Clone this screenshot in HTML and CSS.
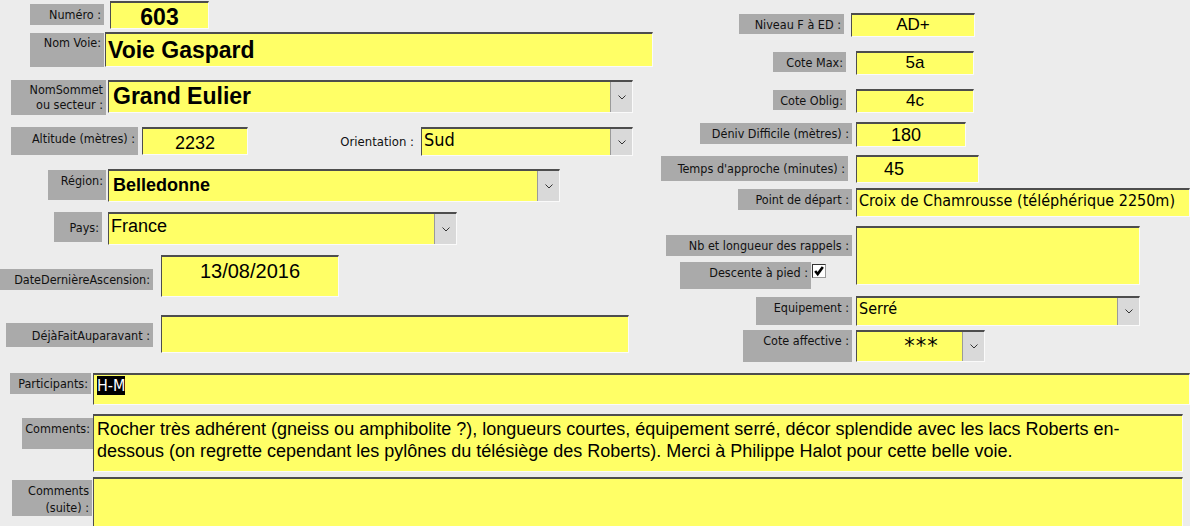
FILE: index.html
```html
<!DOCTYPE html>
<html lang="fr">
<head>
    <meta charset="UTF-8">
    <title>Voie Gaspard</title>
    <link rel="stylesheet" href="styles.css">
</head>
<body>
    <div class="form">
        <div class="top">
            <!-- colonne gauche -->
            <div class="col-left">
                <div class="row r-num">
                    <div class="lbl">Numéro :</div>
                    <div class="fld big center">603</div>
                </div>
                <div class="row r-voie">
                    <div class="lbl">Nom Voie:</div>
                    <div class="fld big">Voie Gaspard</div>
                </div>
                <div class="row r-sommet">
                    <div class="lbl">NomSommet<br>ou secteur :</div>
                    <div class="fld big combo">Grand Eulier<span class="drop"><svg viewBox="0 0 8 5"><polyline points="0.5,0.5 4,4 7.5,0.5"/></svg></span></div>
                </div>
                <div class="row r-alt">
                    <div class="lbl">Altitude (mètres) :</div>
                    <div class="fld mid center">2232</div>
                    <div class="plain">Orientation :</div>
                    <div class="fld tah combo">Sud<span class="drop"><svg viewBox="0 0 8 5"><polyline points="0.5,0.5 4,4 7.5,0.5"/></svg></span></div>
                </div>
                <div class="row r-region">
                    <div class="lbl">Région:</div>
                    <div class="fld mid bold combo">Belledonne<span class="drop"><svg viewBox="0 0 8 5"><polyline points="0.5,0.5 4,4 7.5,0.5"/></svg></span></div>
                </div>
                <div class="row r-pays">
                    <div class="lbl">Pays:</div>
                    <div class="fld mid combo">France<span class="drop"><svg viewBox="0 0 8 5"><polyline points="0.5,0.5 4,4 7.5,0.5"/></svg></span></div>
                </div>
                <div class="row r-date">
                    <div class="lbl">DateDernièreAscension:</div>
                    <div class="fld date center">13/08/2016</div>
                </div>
                <div class="row r-deja">
                    <div class="lbl">DéjàFaitAuparavant :</div>
                    <div class="fld"></div>
                </div>
            </div>

            <!-- colonne droite -->
            <div class="col-right">
                <div class="row n-niveau">
                    <div class="lbl">Niveau F à ED :</div>
                    <div class="fld small center">AD+</div>
                </div>
                <div class="row n-max">
                    <div class="lbl">Cote Max:</div>
                    <div class="fld small center">5a</div>
                </div>
                <div class="row n-oblig">
                    <div class="lbl">Cote Oblig:</div>
                    <div class="fld small center">4c</div>
                </div>
                <div class="row n-deniv">
                    <div class="lbl">Déniv Difficile (mètres) :</div>
                    <div class="fld num">180</div>
                </div>
                <div class="row n-temps">
                    <div class="lbl">Temps d'approche (minutes) :</div>
                    <div class="fld num">45</div>
                </div>
                <div class="row n-point">
                    <div class="lbl">Point de départ :</div>
                    <div class="fld tah16">Croix de Chamrousse (téléphérique 2250m)</div>
                </div>
                <div class="row n-rappels">
                    <div class="stack">
                        <div class="lbl l-rappels">Nb et longueur des rappels :</div>
                        <div class="check-line">
                            <div class="lbl l-pied">Descente à pied :</div>
                            <span class="check"><svg viewBox="0 0 11 11"><path d="M2 5.5 L4.3 8.3 L9 1.8"/></svg></span>
                        </div>
                    </div>
                    <div class="fld"></div>
                </div>
                <div class="row n-equip">
                    <div class="lbl">Equipement :</div>
                    <div class="fld tah16 combo">Serré<span class="drop"><svg viewBox="0 0 8 5"><polyline points="0.5,0.5 4,4 7.5,0.5"/></svg></span></div>
                </div>
                <div class="row n-affect">
                    <div class="lbl">Cote affective :</div>
                    <div class="fld combo stars">***<span class="drop"><svg viewBox="0 0 8 5"><polyline points="0.5,0.5 4,4 7.5,0.5"/></svg></span></div>
                </div>
            </div>
        </div>

        <!-- zone du bas -->
        <div class="bottom">
            <div class="row b-part">
                <div class="lbl">Participants:</div>
                <div class="fld"><span class="sel">H-M</span></div>
            </div>
            <div class="row b-comm">
                <div class="lbl">Comments:</div>
                <div class="fld text">Rocher très adhérent (gneiss ou amphibolite ?), longueurs courtes, équipement serré, décor splendide avec les lacs Roberts en-<br>dessous (on regrette cependant les pylônes du télésiège des Roberts). Merci à Philippe Halot pour cette belle voie.</div>
            </div>
            <div class="row b-suite">
                <div class="lbl">Comments<br>(suite) :</div>
                <div class="fld"></div>
            </div>
        </div>
    </div>
</body>
</html>
```

FILE: styles.css
```css
body {
    margin: 0;
    background: #ececec;
    font-family: "DejaVu Sans Condensed", "DejaVu Sans", sans-serif;
    color: #111;
    overflow: hidden;
}
.form {
    width: 1190px;
    height: 526px;
    overflow: hidden;
}
.top {
    display: grid;
    grid-template-columns: 660px 530px;
    height: 373px;
}
.col-left {
    padding-top: 1px;
}
.col-right {
    padding-top: 13px;
}
.row {
    display: flex;
    align-items: flex-start;
}

/* étiquettes grises */
.lbl {
    box-sizing: border-box;
    background: #aaaaaa;
    font-size: 12.5px;
    line-height: 15px;
    text-align: right;
    padding: 3px 3px 0 0;
    color: #111;
    white-space: nowrap;
}
.plain {
    font-size: 13px;
    line-height: 15px;
    color: #111;
    white-space: nowrap;
    text-align: right;
}

/* champs jaunes */
.fld {
    box-sizing: border-box;
    position: relative;
    background: #ffff66;
    border-top: 2px solid #4d4d4d;
    border-left: 1px solid #4d4d4d;
    border-right: 1px solid #fafafa;
    border-bottom: 1px solid #fafafa;
    font-family: "Liberation Sans", Arial, sans-serif;
    color: #000;
    padding-left: 2px;
    white-space: nowrap;
    overflow: hidden;
}
.center {
    text-align: center;
    padding-left: 0;
}
.big {
    font-size: 23px;
    font-weight: bold;
    line-height: 28px;
}
.mid {
    font-size: 18px;
    line-height: 24px;
    padding-top: 2px;
}
.bold {
    font-weight: bold;
}
.tah {
    font-family: "DejaVu Sans Condensed", sans-serif;
    font-size: 18px;
    line-height: 22px;
}
.tah16 {
    font-family: "DejaVu Sans Condensed", sans-serif;
    font-size: 16px;
    line-height: 22px;
}
.small {
    font-size: 17px;
    line-height: 20px;
}
.num {
    font-size: 18px;
    line-height: 20px;
}
.date {
    font-size: 20px;
    line-height: 24px;
}
.text {
    font-size: 18px;
    line-height: 22px;
    padding: 2px 0 0 3px;
}
.sel {
    display: inline-block;
    background: #000;
    color: #fff;
    font-family: "DejaVu Sans Condensed", sans-serif;
    font-size: 16px;
    line-height: 19px;
    margin-top: 1px;
}

/* bouton de liste déroulante */
.combo {
    padding-right: 24px;
}
.drop {
    position: absolute;
    top: 0;
    right: 0;
    bottom: 0;
    width: 21px;
    background: #d9d9d9;
    border-left: 1px solid #9a9a9a;
    display: flex;
    align-items: center;
    justify-content: center;
}
.drop svg {
    width: 8px;
    height: 5px;
    fill: none;
    stroke: #333;
    stroke-width: 1;
}

/* case à cocher */
.check {
    display: inline-block;
    box-sizing: border-box;
    width: 14px;
    height: 14px;
    margin: 2px 0 0 1px;
    background: #fff;
    border-top: 1px solid #333;
    border-left: 1px solid #333;
    border-right: 1px solid #999;
    border-bottom: 1px solid #999;
}
.check svg {
    display: block;
    width: 12px;
    height: 12px;
    fill: none;
    stroke: #000;
    stroke-width: 2.4;
}
.check-line {
    display: flex;
    align-items: flex-start;
    margin: 6px 0 0 20px;
}

/* colonne gauche */
.r-num { height: 31px; }
.r-num .lbl { margin: 3px 0 0 30px; width: 74px; height: 21px; }
.r-num .fld { margin-left: 6px; width: 99px; height: 28px; }

.r-voie { height: 48px; }
.r-voie .lbl { margin: 1px 0 0 30px; width: 74px; height: 34px; padding-top: 2px; }
.r-voie .fld { margin-left: 1px; width: 548px; height: 35px; padding-top: 2px; }

.r-sommet { height: 47px; }
.r-sommet .lbl { margin-left: 11px; width: 95px; height: 35px; padding-top: 2px; line-height: 15px; }
.r-sommet .fld { margin-left: 2px; width: 525px; height: 33px; padding-left: 4px; }

.r-alt { height: 42px; }
.r-alt .lbl { margin-left: 11px; width: 127px; height: 28px; padding-top: 4px; }
.r-alt .fld.mid { margin-left: 4px; width: 106px; height: 28px; }
.r-alt .plain { margin: 7px 0 0 84px; width: 82px; }
.r-alt .fld.tah { margin-left: 7px; width: 212px; height: 29px; }

.r-region { height: 43px; }
.r-region .lbl { margin: 1px 0 0 48px; width: 58px; height: 30px; }
.r-region .fld { margin-left: 2px; width: 452px; height: 33px; padding-left: 4px; }

.r-pays { height: 43px; }
.r-pays .lbl { margin-left: 54px; width: 48px; height: 30px; padding-top: 8px; }
.r-pays .fld { margin-left: 6px; width: 349px; height: 33px; padding-top: 0; }

.r-date { height: 60px; }
.r-date .lbl { margin-top: 14px; width: 153px; height: 21px; }
.r-date .fld { margin-left: 8px; width: 178px; height: 42px; padding-top: 2px; }

.r-deja { height: 58px; }
.r-deja .lbl { margin: 8px 0 0 6px; width: 147px; height: 24px; padding-top: 5px; }
.r-deja .fld { margin-left: 8px; width: 468px; height: 38px; }

/* colonne droite */
.n-niveau { height: 38px; }
.n-niveau .lbl { margin: 1px 0 0 79px; width: 105px; height: 20px; }
.n-niveau .fld { margin-left: 7px; width: 124px; height: 24px; }

.n-max, .n-oblig { height: 38px; }
.n-oblig { height: 33px; }
.n-max .lbl, .n-oblig .lbl { margin: 1px 0 0 113px; width: 73px; height: 20px; }
.n-max .fld, .n-oblig .fld { margin-left: 10px; width: 118px; height: 24px; }

.n-deniv { height: 33px; }
.n-deniv .lbl { margin: 1px 0 0 40px; width: 152px; height: 21px; }
.n-deniv .fld { margin-left: 4px; width: 110px; height: 25px; padding: 1px 0 0 34px; }

.n-temps { height: 33px; }
.n-temps .lbl { margin: 1px 0 0 1px; width: 187px; height: 25px; padding-top: 5px; }
.n-temps .fld { margin-left: 8px; width: 123px; height: 28px; padding: 2px 0 0 27px; }

.n-point { height: 38px; }
.n-point .lbl { margin: 1px 0 0 78px; width: 114px; height: 21px; }
.n-point .fld { margin-left: 4px; width: 334px; height: 29px; }

.n-rappels { height: 70px; }
.stack { width: 196px; }
.l-rappels { margin: 9px 0 0 6px; width: 186px; height: 21px; }
.l-pied { width: 131px; height: 27px; }
.n-rappels > .fld { width: 284px; height: 59px; }

.n-equip { height: 34px; }
.n-equip .lbl { margin: 1px 0 0 96px; width: 96px; height: 28px; }
.n-equip .fld { margin-left: 4px; width: 284px; height: 30px; }

.n-affect .lbl { margin-left: 83px; width: 109px; height: 32px; }
.n-affect .fld { margin-left: 4px; width: 129px; height: 32px; }
.stars {
    text-align: center;
    padding: 2px 0 0 2px;
    font-family: "DejaVu Sans", sans-serif;
    font-size: 21px;
    line-height: 24px;
    letter-spacing: 1px;
}

/* zone du bas */
.b-part { height: 41px; }
.b-part .lbl { margin-left: 10px; width: 81px; height: 21px; }
.b-part .fld { margin-left: 2px; width: 1097px; height: 32px; padding-left: 3px; }

.b-comm { height: 63px; }
.b-comm .lbl { margin: 4px 0 0 22px; width: 71px; height: 31px; }
.b-comm .fld { width: 1090px; height: 58px; }

.b-suite .lbl { margin: 3px 0 0 12px; width: 80px; height: 36px; padding-top: 2px; line-height: 17px; }
.b-suite .fld { margin-left: 1px; width: 1090px; height: 60px; }
```
